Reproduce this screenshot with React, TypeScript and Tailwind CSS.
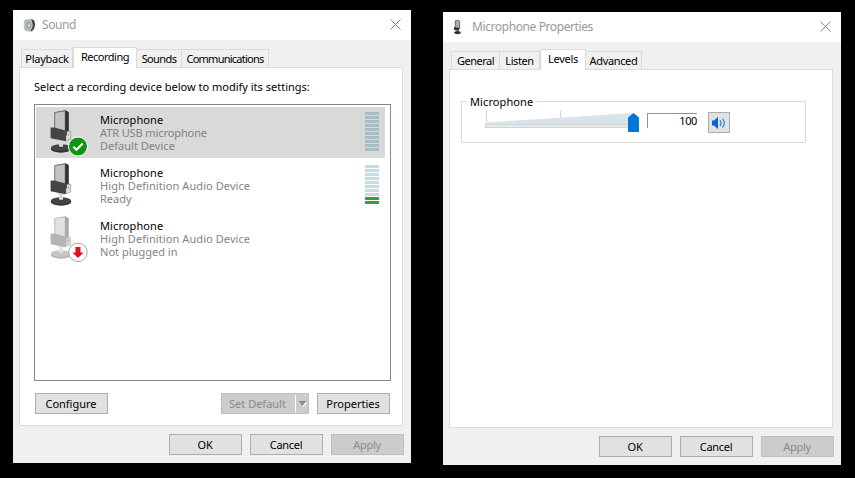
import type { ReactNode } from "react";

type Tab = { name: string; width: string; spacing: string };

function CloseIcon() {
  return (
    <svg width="11" height="11" viewBox="0 0 11 11" stroke="#858585" strokeWidth="1" fill="none">
      <path d="M.5.5l10 10M10.5.5l-10 10" />
    </svg>
  );
}

function SpeakerIcon() {
  return (
    <svg width="13" height="15" viewBox="0 0 13 15">
      <path d="M2.5 2 8 .7l3.2 1.8.8 4-1 4.5-3 2.8-4-.6L1 10 .6 5z" fill="#b7bbbb" />
      <path d="M8.5.9l2.7 1.5 1 4.2-1.2 4.4-2.6 2.6-.7-.9 1.6-5z" fill="#45494b" />
      <ellipse cx="5.4" cy="7" rx="3.8" ry="5.2" fill="#a9b1b1" stroke="#cdd2d2" strokeWidth=".8" />
      <ellipse cx="6" cy="7.2" rx="1.8" ry="2.7" fill="#d0d6d6" stroke="#7a8383" strokeWidth=".7" />
      <path d="M1.2 3.5l2-1.6M1 10.3l2.5 2.5" stroke="#777f7f" strokeWidth=".8" />
    </svg>
  );
}

function SmallMicIcon() {
  return (
    <svg width="9" height="15" viewBox="0 0 9 15">
      <path d="M2.3.8 5.5.3l1.2 1V9H2.3z" fill="#aaa" stroke="#555" strokeWidth=".8" />
      <path d="M1 7.2l5 .6v3L1 10z" fill="#343434" />
      <path d="M3.3 10h2v2.5h-2z" fill="#777" />
      <ellipse cx="4.5" cy="12.6" rx="3.3" ry="1.7" fill="#303030" />
    </svg>
  );
}

function MicrophoneIcon({ faded = false }: { faded?: boolean }) {
  const c = faded
    ? { edge: "#aaa", face: "#e1e1e1", band: "#b5b5b5", clip: "#d5d5d5", base: "#b3b3b3", top: "#c6c6c6", stem: "#e5e5e5", line: "#bbb" }
    : { edge: "#303030", face: "#c2c2c2", band: "#454547", clip: "#dedede", base: "#303030", top: "#444", stem: "#d8d8d8", line: "#777" };
  return (
    <svg width="24" height="43" viewBox="0 0 24 43" className="block">
      <ellipse cx="11" cy="38.8" rx="10.3" ry="3.9" fill={c.base} />
      <ellipse cx="11" cy="37.6" rx="10" ry="3.4" fill={c.top} />
      <path d="M6.5 29h8.5l-2.2 3.5.4 3.8c-1.1 1-3.1 1-4.2 0l.2-3.8z" fill={c.stem} />
      <path d="M4.5 2.2 15.4.3 18.8 2v22L15 26 4.5 21z" fill={c.edge} />
      <path d="M4.9 2.6 15 .9v21.2L4.9 20z" fill={c.face} stroke={c.line} strokeWidth=".6" />
      <path d="M15.7 21.4l5-.2v7.8l-5 1.6z" fill={c.clip} stroke={c.line} strokeWidth=".5" />
      <path d="M.6 17.6 4.3 17.4l11.4 3.2 1.2.8v4l-1 .4v5.5L.6 28.2z" fill={c.band} />
      <path d="M18.4 23.5v2" stroke={faded ? "#ff9696" : "#999"} strokeWidth="1" />
    </svg>
  );
}

function StatusBadge({ kind }: { kind: "check" | "down" }) {
  return (
    <svg width="20" height="20" viewBox="0 0 20 20" className="absolute left-[18px] top-[26px]">
      {kind === "check" ? (
        <>
          <circle cx="10" cy="10.5" r="9.5" fill="#109510" stroke="#fff" />
          <path d="M5.3 10.7l3.2 3.1 6.2-6.3" fill="none" stroke="#fff" strokeWidth="2" />
        </>
      ) : (
        <>
          <circle cx="10" cy="10.3" r="9.2" fill="#fff" stroke="#a6a6a6" />
          <path d="M7.5 5h5v5.5h3L10 16l-5.5-5.5h3z" fill="#df1020" />
        </>
      )}
    </svg>
  );
}

function Button({ children, disabled = false }: { children: ReactNode; disabled?: boolean }) {
  return (
    <button
      disabled={disabled}
      className={`flex h-[21px] w-[73px] items-center justify-center border pr-px pt-px ${
        disabled ? "border-[#bfbfbf] bg-[#cccccc] text-[#8b8b8b]" : "border-[#adadad] bg-[#e1e1e1] text-black"
      }`}
    >
      {children}
    </button>
  );
}

function TabStrip({ tabs, active }: { tabs: Tab[]; active: string }) {
  return (
    <div className="relative z-10 -mb-px ml-[2px] flex h-[21px] items-end whitespace-nowrap">
      {tabs.map((t) =>
        t.name === active ? (
          <div key={t.name} className={`${t.width} ${t.spacing} flex h-[21px] justify-center border border-b-0 border-[#d9d9d9] bg-white pt-px leading-[16px]`}>
            {t.name}
          </div>
        ) : (
          <div key={t.name} className={`${t.width} ${t.spacing} mb-px flex h-[18px] justify-center border-r border-t border-[#d9d9d9] bg-[#f0f0f0] pt-px leading-[16px] first:border-l`}>
            {t.name}
          </div>
        ),
      )}
    </div>
  );
}

function Dialog({ title, titleSpacing, icon, tabs, active, children }: {
  title: string;
  titleSpacing: string;
  icon: ReactNode;
  tabs: Tab[];
  active: string;
  children: ReactNode;
}) {
  return (
    <section className="flex h-[453px] w-[398px] flex-col bg-[#f0f0f0]">
      <header className="flex h-[30px] shrink-0 items-center justify-between bg-white pl-[10px] pr-[10px]">
        <div className="flex items-center">
          <span className="flex w-[19px]">{icon}</span>
          <span className={`text-[12px] text-[#999] ${titleSpacing}`}>{title}</span>
        </div>
        <span className="-mt-[2px]">
          <CloseIcon />
        </span>
      </header>
      <div className="pl-[6px] pr-2 pt-[7px]">
        <TabStrip tabs={tabs} active={active} />
        <div className="h-[359px] border border-[#dcdcdc] bg-white">{children}</div>
      </div>
      <footer className="flex justify-end gap-2 pr-[7px] pt-2 tracking-[-0.3px]">
        <Button>OK</Button>
        <Button>Cancel</Button>
        <Button disabled>Apply</Button>
      </footer>
    </section>
  );
}

function Meter({ level, selected }: { level: number; selected?: boolean }) {
  return (
    <div className="mt-[5px] flex h-[39px] w-[14px] flex-col gap-px">
      {Array.from({ length: 10 }, (_, i) => (
        <i key={i} className={`h-[3px] ${i >= 10 - level ? "bg-[#399b42]" : selected ? "bg-[#a5bdc6]" : "bg-[#c5dce4]"}`} />
      ))}
    </div>
  );
}

const devices = [
  { detail: "ATR USB microphone", status: "Default Device", badge: "check" as const, level: 0, selected: true, spacing: "tracking-[-0.1px]" },
  { detail: "High Definition Audio Device", status: "Ready", level: 2, spacing: "tracking-[0.08px]" },
  { detail: "High Definition Audio Device", status: "Not plugged in", badge: "down" as const, faded: true, spacing: "tracking-[0.08px]" },
];

function RecordingPanel() {
  return (
    <div className="px-[14px] pt-[11px]">
      <p className="h-[25px] whitespace-nowrap leading-[16px]">Select a recording device below to modify its settings:</p>
      <div className="flex h-[277px] w-[357px] flex-col gap-[2px] border border-[#828790] pl-px pt-[2px]">
        {devices.map((d, i) => (
          <div key={i} className={`flex h-[51px] w-[349px] justify-between pr-[6px] ${d.selected ? "bg-[#d9d9d9]" : ""}`}>
            <div className="flex">
              <div className="relative ml-[14px] mt-[3px] w-[50px]">
                <MicrophoneIcon faded={d.faded} />
                {d.badge && <StatusBadge kind={d.badge} />}
              </div>
              <div className={`pt-[6px] leading-[13px] text-[#838383] ${d.spacing}`}>
                <p className="tracking-[0.1px] text-black">Microphone</p>
                <p>{d.detail}</p>
                <p className="tracking-[0.02px]">{d.status}</p>
              </div>
            </div>
            {!d.faded && <Meter level={d.level} selected={d.selected} />}
          </div>
        ))}
      </div>
      <div className="ml-px mt-[12px] flex w-[355px] justify-between">
        <Button>Configure</Button>
        <div className="flex gap-2">
          <button disabled className="flex h-[21px] w-[88px] items-center border border-[#bfbfbf] bg-[#ccc] text-[#8b8b8b]">
            <span className="w-[73px] pr-[2px] pt-px text-center">Set Default</span>
            <span className="flex h-[17px] items-center border-l border-white pl-[2px]">
              <svg width="10" height="6" viewBox="0 0 10 6">
                <path d="M1.5 1h8L5.5 6z" fill="#fff" />
                <path d="M.5 0h8L4.5 5z" fill="#8b8b8b" />
              </svg>
            </span>
          </button>
          <Button>Properties</Button>
        </div>
      </div>
    </div>
  );
}

function LevelsPanel() {
  return (
    <div className="pl-[11px] pt-[24px]">
      <fieldset className="h-[50px] w-[345px]">
        <div className="flex h-[15px] items-center">
          <span className="mt-[7px] w-[6px] self-start border-t border-[#dcdcdc]" />
          <legend className="w-[68px] pl-[3px] leading-[15px] tracking-[0.1px]">Microphone</legend>
          <span className="mt-[7px] grow self-start border-t border-[#dcdcdc]" />
        </div>
        <div className="-mt-[8px] flex h-[42px] items-start border border-t-0 border-[#dcdcdc] pl-[23px]">
          <svg width="156" height="26" viewBox="0 0 156 26" className="mt-[8px]">
            <path d="M1.5 2v11M75.5 2v7" stroke="#d5d5d5" />
            <path d="M1 13.5 148 4v11H1z" fill="#d9e3ea" />
            <rect x=".5" y="15.5" width="148" height="3" fill="#e7eaea" stroke="#d2d5d5" />
            <path d="M143 8.5 148.5 4 154 8.5V23h-11z" fill="#0078d7" />
          </svg>
          <div className="ml-[6px] mt-[12px] h-[15px] w-[50px] border-l border-t border-[#929292] text-right leading-[14px] tracking-[-0.4px]">100</div>
          <button className="ml-[11px] mt-[11px] flex h-[21px] w-[22px] items-center justify-center border border-[#adadad] bg-[#e1e1e1]">
            <svg width="16" height="14" viewBox="0 0 16 14">
              <path d="M1 4.5h2L7 1v12L3 9.5H1z" fill="#0067cf" />
              <path d="M9 4q2 3 0 6M11.5 2.5q3.5 4.5 0 9" stroke="#2588df" strokeWidth="1.2" fill="none" />
            </svg>
          </button>
        </div>
      </fieldset>
    </div>
  );
}

export default function App() {
  return (
    <main className="flex h-[478px] w-[855px] items-start gap-8 overflow-hidden bg-black pl-[13px] pt-[10px] font-['Noto_Sans','Open_Sans',sans-serif] text-[11px] text-black">
      <Dialog
        title="Sound"
        titleSpacing="tracking-[-0.4px]"
        icon={<SpeakerIcon />}
        active="Recording"
        tabs={[
          { name: "Playback", width: "w-[52px]", spacing: "tracking-[-0.25px]" },
          { name: "Recording", width: "w-[64px]", spacing: "tracking-[-0.5px]" },
          { name: "Sounds", width: "w-[45px]", spacing: "tracking-[-0.6px]" },
          { name: "Communications", width: "w-[87px]", spacing: "tracking-[-0.75px]" },
        ]}
      >
        <RecordingPanel />
      </Dialog>
      <div className="pt-[2px]">
        <Dialog
          title="Microphone Properties"
          titleSpacing="tracking-[-0.4px]"
          icon={<SmallMicIcon />}
          active="Levels"
          tabs={[
            { name: "General", width: "w-[49px]", spacing: "tracking-[-0.5px]" },
            { name: "Listen", width: "w-[40px]", spacing: "tracking-[-0.4px]" },
            { name: "Levels", width: "w-[46px]", spacing: "tracking-[-0.3px]" },
            { name: "Advanced", width: "w-[56px]", spacing: "tracking-[-0.35px]" },
          ]}
        >
          <LevelsPanel />
        </Dialog>
      </div>
    </main>
  );
}
